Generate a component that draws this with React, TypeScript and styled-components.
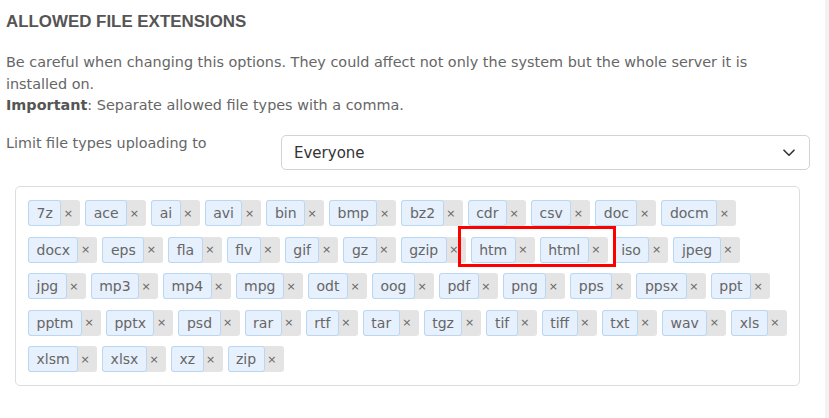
import React from "react";
import styled, { createGlobalStyle } from "styled-components";

const Global = createGlobalStyle`
  html, body { margin: 0; padding: 0; }
  body {
    background: #f3f3f6;
    font-family: "DejaVu Sans", sans-serif;
  }
`;

const Panel = styled.div`
  width: 825px;
  height: 418px;
  box-sizing: border-box;
  background: #ffffff;
  padding: 13px 15px 0 6px;
  overflow: hidden;
`;

const Title = styled.h2`
  margin: 0;
  font-family: "Liberation Sans", Arial, sans-serif;
  font-weight: 700;
  font-size: 16.9px;
  line-height: 18.4px;
  color: #555555;
`;

const Notice = styled.p`
  margin: 20.6px 0 0;
  font-size: 14.4px;
  line-height: 21.7px;
  color: #666666;
`;

const Strong = styled.strong`
  color: #555555;
  font-weight: 700;
`;

const FieldRow = styled.div`
  display: grid;
  grid-template-columns: 275px 1fr;
  align-items: start;
  margin-top: 16px;
`;

const Label = styled.label`
  font-size: 14.35px;
  line-height: 21.7px;
  color: #666666;
`;

const Select = styled.div`
  margin-top: 2px;
  height: 35px;
  box-sizing: border-box;
  border: 1px solid #d2d2d8;
  border-radius: 5px;
  display: flex;
  align-items: center;
  justify-content: space-between;
  padding: 0 14px 0 12px;
  font-size: 15px;
  color: #333333;
  background: #fff;
`;

const TagBox = styled.div`
  margin: 16px 10px 0 9px;
  border: 1px solid #dddde0;
  border-radius: 5px;
  padding: 13px 12px 13px 12px;
  display: flex;
  flex-wrap: wrap;
  gap: 10.5px 5px;
`;

const Tag = styled.span`
  display: inline-flex;
  height: 26px;
  background: #e4e4e4;
  border-radius: 3px;
`;

const TagLabel = styled.span`
  box-sizing: border-box;
  height: 26px;
  display: flex;
  align-items: center;
  padding: 0 7.5px;
  border: 1px solid #b9d7f2;
  border-radius: 3px;
  background: #e6f1fd;
  font-size: 14px;
  color: #666666;
`;

const Remove = styled.span`
  box-sizing: border-box;
  width: 19px;
  display: flex;
  align-items: center;
  padding-left: 2.5px;
  font-size: 11px;
  color: #666666;
`;

const Highlight = styled.span`
  position: relative;
  display: inline-flex;
  gap: 5px;
  &::after {
    content: "";
    position: absolute;
    top: -11px;
    left: -13px;
    right: -8px;
    bottom: -4px;
    border: 3px solid #ff0000;
    pointer-events: none;
  }
`;

const before = [
  "7z", "ace", "ai", "avi", "bin", "bmp", "bz2", "cdr", "csv", "doc", "docm",
  "docx", "eps", "fla", "flv", "gif", "gz", "gzip",
];
const highlighted = ["htm", "html"];
const after = [
  "iso", "jpeg", "jpg", "mp3", "mp4", "mpg", "odt", "oog", "pdf", "png", "pps",
  "ppsx", "ppt", "pptm", "pptx", "psd", "rar", "rtf", "tar", "tgz", "tif", "tiff",
  "txt", "wav", "xls", "xlsm", "xlsx", "xz", "zip",
];

const ExtTag = ({ name }: { name: string }) => (
  <Tag>
    <TagLabel>{name}</TagLabel>
    <Remove>×</Remove>
  </Tag>
);

const Chevron = () => (
  <svg width="12" height="8" viewBox="0 0 12 8" fill="none">
    <polyline points="1,1.2 6,6.2 11,1.2" stroke="#333" strokeWidth="1.6" strokeLinecap="round" strokeLinejoin="round" />
  </svg>
);

export default function App() {
  return (
    <>
      <Global />
      <Panel>
        <Title>ALLOWED FILE EXTENSIONS</Title>
        <Notice>
          Be careful when changing this options. They could affect not only the system but the whole server it is installed on.
          <br />
          <Strong>Important</Strong>: Separate allowed file types with a comma.
        </Notice>
        <FieldRow>
          <Label>Limit file types uploading to</Label>
          <Select>
            <span>Everyone</span>
            <Chevron />
          </Select>
        </FieldRow>
        <TagBox>
          {before.map((n) => (
            <ExtTag key={n} name={n} />
          ))}
          <Highlight>
            {highlighted.map((n) => (
              <ExtTag key={n} name={n} />
            ))}
          </Highlight>
          {after.map((n) => (
            <ExtTag key={n} name={n} />
          ))}
        </TagBox>
      </Panel>
    </>
  );
}
